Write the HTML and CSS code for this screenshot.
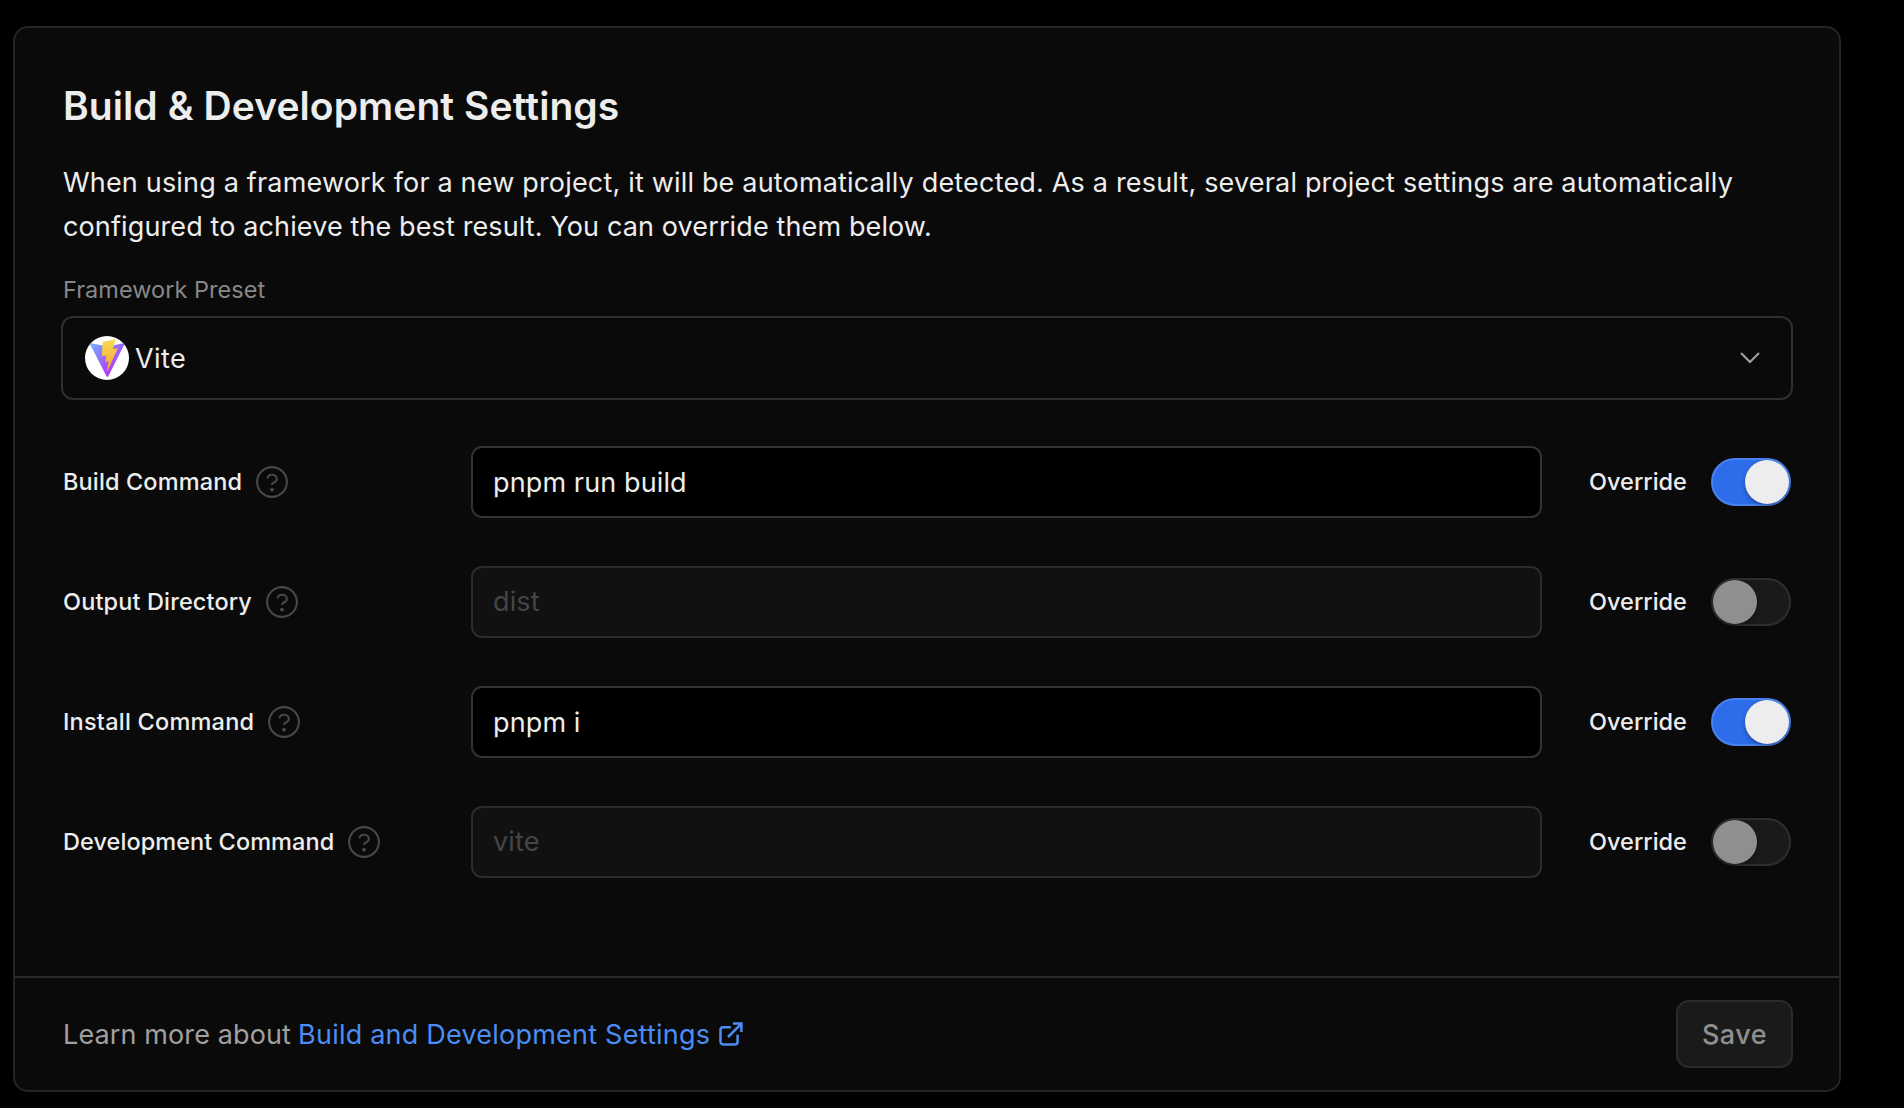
FILE: index.html
```
<!DOCTYPE html>
<html lang="en">
<head>
<meta charset="utf-8">
<title>Build &amp; Development Settings</title>
<link rel="stylesheet" href="styles.css">
</head>
<body>
<svg class="defs" width="0" height="0" aria-hidden="true">
  <symbol id="help" viewBox="0 0 32 32">
    <g fill="none" stroke="currentColor" stroke-width="2.1">
      <circle cx="16" cy="16" r="14.9"/>
      <path d="M11.4 12.4C11.8 10.2 13.6 8.8 16 8.8c2.8 0 4.8 1.7 4.8 4.1 0 2-1.5 2.9-3.1 3.6-1.2.6-1.7 1.1-1.7 2.4"/>
    </g>
    <circle cx="16" cy="23.7" r="1.9" fill="currentColor"/>
  </symbol>
</svg>
<main class="card">
  <div class="content">
    <h1 class="title">Build &amp; Development Settings</h1>
    <p class="intro"><span class="line">When using a framework for a new project, it will be automatically detected. As a result, several project settings are automatically</span> <span class="line second">configured to achieve the best result. You can override them below.</span></p>
    <div class="preset-label">Framework Preset</div>
    <div class="select">
      <svg class="logo" viewBox="0 0 44 44" width="44" height="44">
        <defs>
          <linearGradient id="vee" x1="6" y1="33" x2="235" y2="344" gradientUnits="userSpaceOnUse"><stop stop-color="#6CB4FF"/><stop offset="1" stop-color="#B03CFA"/></linearGradient>
          <linearGradient id="bolt" x1="194.651" y1="8.818" x2="236.076" y2="292.989" gradientUnits="userSpaceOnUse"><stop stop-color="#F8DC50"/><stop offset="1" stop-color="#F5A83C"/></linearGradient>
        </defs>
        <circle cx="22" cy="22" r="22" fill="#fff"/>
        <g transform="translate(4.4 3) scale(.087 .0967)">
          <path fill="url(#vee)" d="M399.641 59.5246L215.643 388.545C211.844 395.338 202.084 395.378 198.228 388.618L10.5817 59.5563C6.38087 52.1896 12.6802 43.2665 21.0281 44.7586L205.223 77.6824C206.398 77.8924 207.601 77.8904 208.776 77.6763L389.119 44.8058C397.439 43.2894 403.768 52.1434 399.641 59.5246Z"/>
          <path fill="url(#bolt)" d="M292.965 1.5744L156.801 28.2552C154.563 28.6937 152.906 30.5903 152.771 32.8664L144.395 174.33C144.198 177.662 147.258 180.248 150.51 179.498L188.42 170.749C191.967 169.931 195.172 173.055 194.443 176.622L183.18 231.775C182.422 235.487 185.907 238.661 189.532 237.56L212.947 230.446C216.577 229.344 220.065 232.527 219.297 236.242L201.398 322.875C200.278 328.294 207.486 331.249 210.492 326.603L212.5 323.5L323.454 102.072C325.312 98.3645 322.108 94.137 318.036 94.9228L279.014 102.454C275.347 103.161 272.227 99.746 273.262 96.1583L298.731 7.86689C299.767 4.27314 296.636 0.855181 292.965 1.5744Z"/>
        </g>
      </svg>
      <span class="select-value">Vite</span>
      <svg class="chevron" viewBox="0 0 20 12" width="20" height="12"><path d="M1 1l9 9 9-9" fill="none" stroke="currentColor" stroke-width="2.1"/></svg>
    </div>
    <div class="rows">
      <div class="row">
        <div class="label"><span>Build Command</span><svg class="help"><use href="#help"/></svg></div>
        <div class="input">pnpm run build</div>
        <div class="override">Override</div>
        <div class="toggle on"><span class="thumb"></span></div>
      </div>
      <div class="row">
        <div class="label"><span>Output Directory</span><svg class="help"><use href="#help"/></svg></div>
        <div class="input disabled">dist</div>
        <div class="override">Override</div>
        <div class="toggle"><span class="thumb"></span></div>
      </div>
      <div class="row">
        <div class="label install"><span>Install Command</span><svg class="help"><use href="#help"/></svg></div>
        <div class="input">pnpm i</div>
        <div class="override">Override</div>
        <div class="toggle on"><span class="thumb"></span></div>
      </div>
      <div class="row">
        <div class="label development"><span>Development Command</span><svg class="help"><use href="#help"/></svg></div>
        <div class="input disabled">vite</div>
        <div class="override">Override</div>
        <div class="toggle"><span class="thumb"></span></div>
      </div>
    </div>
  </div>
  <footer class="footer">
    <div class="learn"><span>Learn more about</span><a class="link">Build and Development Settings</a><svg class="external" viewBox="0 0 24 24" width="24" height="24"><path d="M11.8 5.3H4.1a2.6 2.6 0 0 0-2.6 2.6v11.9a2.6 2.6 0 0 0 2.6 2.6h11.9a2.6 2.6 0 0 0 2.6-2.6v-7M14 1.6h8.4V10M22.2 1.8L9 15" fill="none" stroke="currentColor" stroke-width="2.5"/></svg></div>
    <div class="save">Save</div>
  </footer>
</main>
</body>
</html>
```
FILE: styles.css
```
* { box-sizing: border-box; }
html { background: #000; }
body {
  margin: 0;
  padding: 26px 0 0 13px;
  background: #000;
  color: #ededed;
  font-family: Inter, "Liberation Sans", sans-serif;
  font-size: 27px;
  white-space: nowrap;
  height: 1108px;
  overflow: hidden;
}
.defs { position: absolute; }
svg { display: block; flex: none; }

.card {
  display: flex;
  flex-direction: column;
  width: 1828px;
  height: 1066px;
  border: 2px solid #242424;
  border-radius: 15px;
  background: #0a0a0a;
}
.content { flex: 1; padding: 54px 46px 0; }
.title {
  margin: 0 0 31px 2px;
  font-size: 39px;
  font-weight: 600;
  line-height: 48px;
  letter-spacing: 0.08px;
}
.intro { margin: 0 0 26px 2px; line-height: 44px; }
.line { display: block; letter-spacing: 0.18px; }
.second { letter-spacing: 0.12px; }
.preset-label {
  margin: 0 0 11px 2px;
  font-size: 23.5px;
  line-height: 30px;
  letter-spacing: 0.03px;
  color: #878787;
}
.select {
  display: flex;
  align-items: center;
  height: 84px;
  padding: 0 31px 0 22px;
  border: 2px solid #2e2e2e;
  border-radius: 12px;
}
.select-value { margin-left: 6px; flex: 1; letter-spacing: 0.4px; }
.chevron { color: #a0a0a0; }

.rows { display: grid; gap: 48px; margin-top: 46px; }
.row {
  display: grid;
  grid-template-columns: 410px 1071px 169px 80px;
  align-items: center;
  height: 72px;
}
.label, .override { font-size: 23.5px; font-weight: 500; }
.label span, .override { padding-bottom: 2px; }
.label { display: flex; align-items: center; gap: 14px; padding-left: 2px; letter-spacing: 0.13px; }
.label.install { letter-spacing: 0.22px; }
.label.development { letter-spacing: 0.06px; }
.help { width: 32px; height: 32px; color: #484848; }
.input {
  display: flex;
  align-items: center;
  height: 72px;
  padding: 0 20px;
  border: 2px solid #333;
  border-radius: 11px;
  background: #000;
  letter-spacing: 0.12px;
}
.input.disabled { border-color: #2c2c2c; background: #111; color: #454545; padding-bottom: 2px; }
.override { padding-left: 47px; }
.toggle {
  display: flex;
  align-items: center;
  height: 48px;
  border: 2px solid #2e2e2e;
  border-radius: 24px;
  background: #1a1a1a;
}
.thumb {
  width: 44px;
  height: 44px;
  border-radius: 50%;
  background: #8f8f8f;
  box-shadow: 0 2px 4px rgba(0, 0, 0, 0.35);
}
.toggle.on { justify-content: flex-end; border-color: #4983ef; background: #2d6dea; }
.toggle.on .thumb { background: #ededed; }

.footer {
  display: flex;
  align-items: center;
  justify-content: space-between;
  height: 114px;
  padding: 0 46px 0 48px;
  border-top: 2px solid #2a2a2a;
}
.learn { display: flex; align-items: center; color: #a0a0a0; letter-spacing: 0.12px; }
.link { margin-left: 7px; color: #4b8df5; letter-spacing: 0.22px; }
.external { margin-left: 9px; color: #4b8df5; }
.save {
  display: flex;
  align-items: center;
  justify-content: center;
  width: 117px;
  height: 68px;
  border: 2px solid #2c2c2c;
  border-radius: 13px;
  background: #1a1a1a;
  color: #8f8f8f;
  font-weight: 500;
  letter-spacing: 0.5px;
}
```
